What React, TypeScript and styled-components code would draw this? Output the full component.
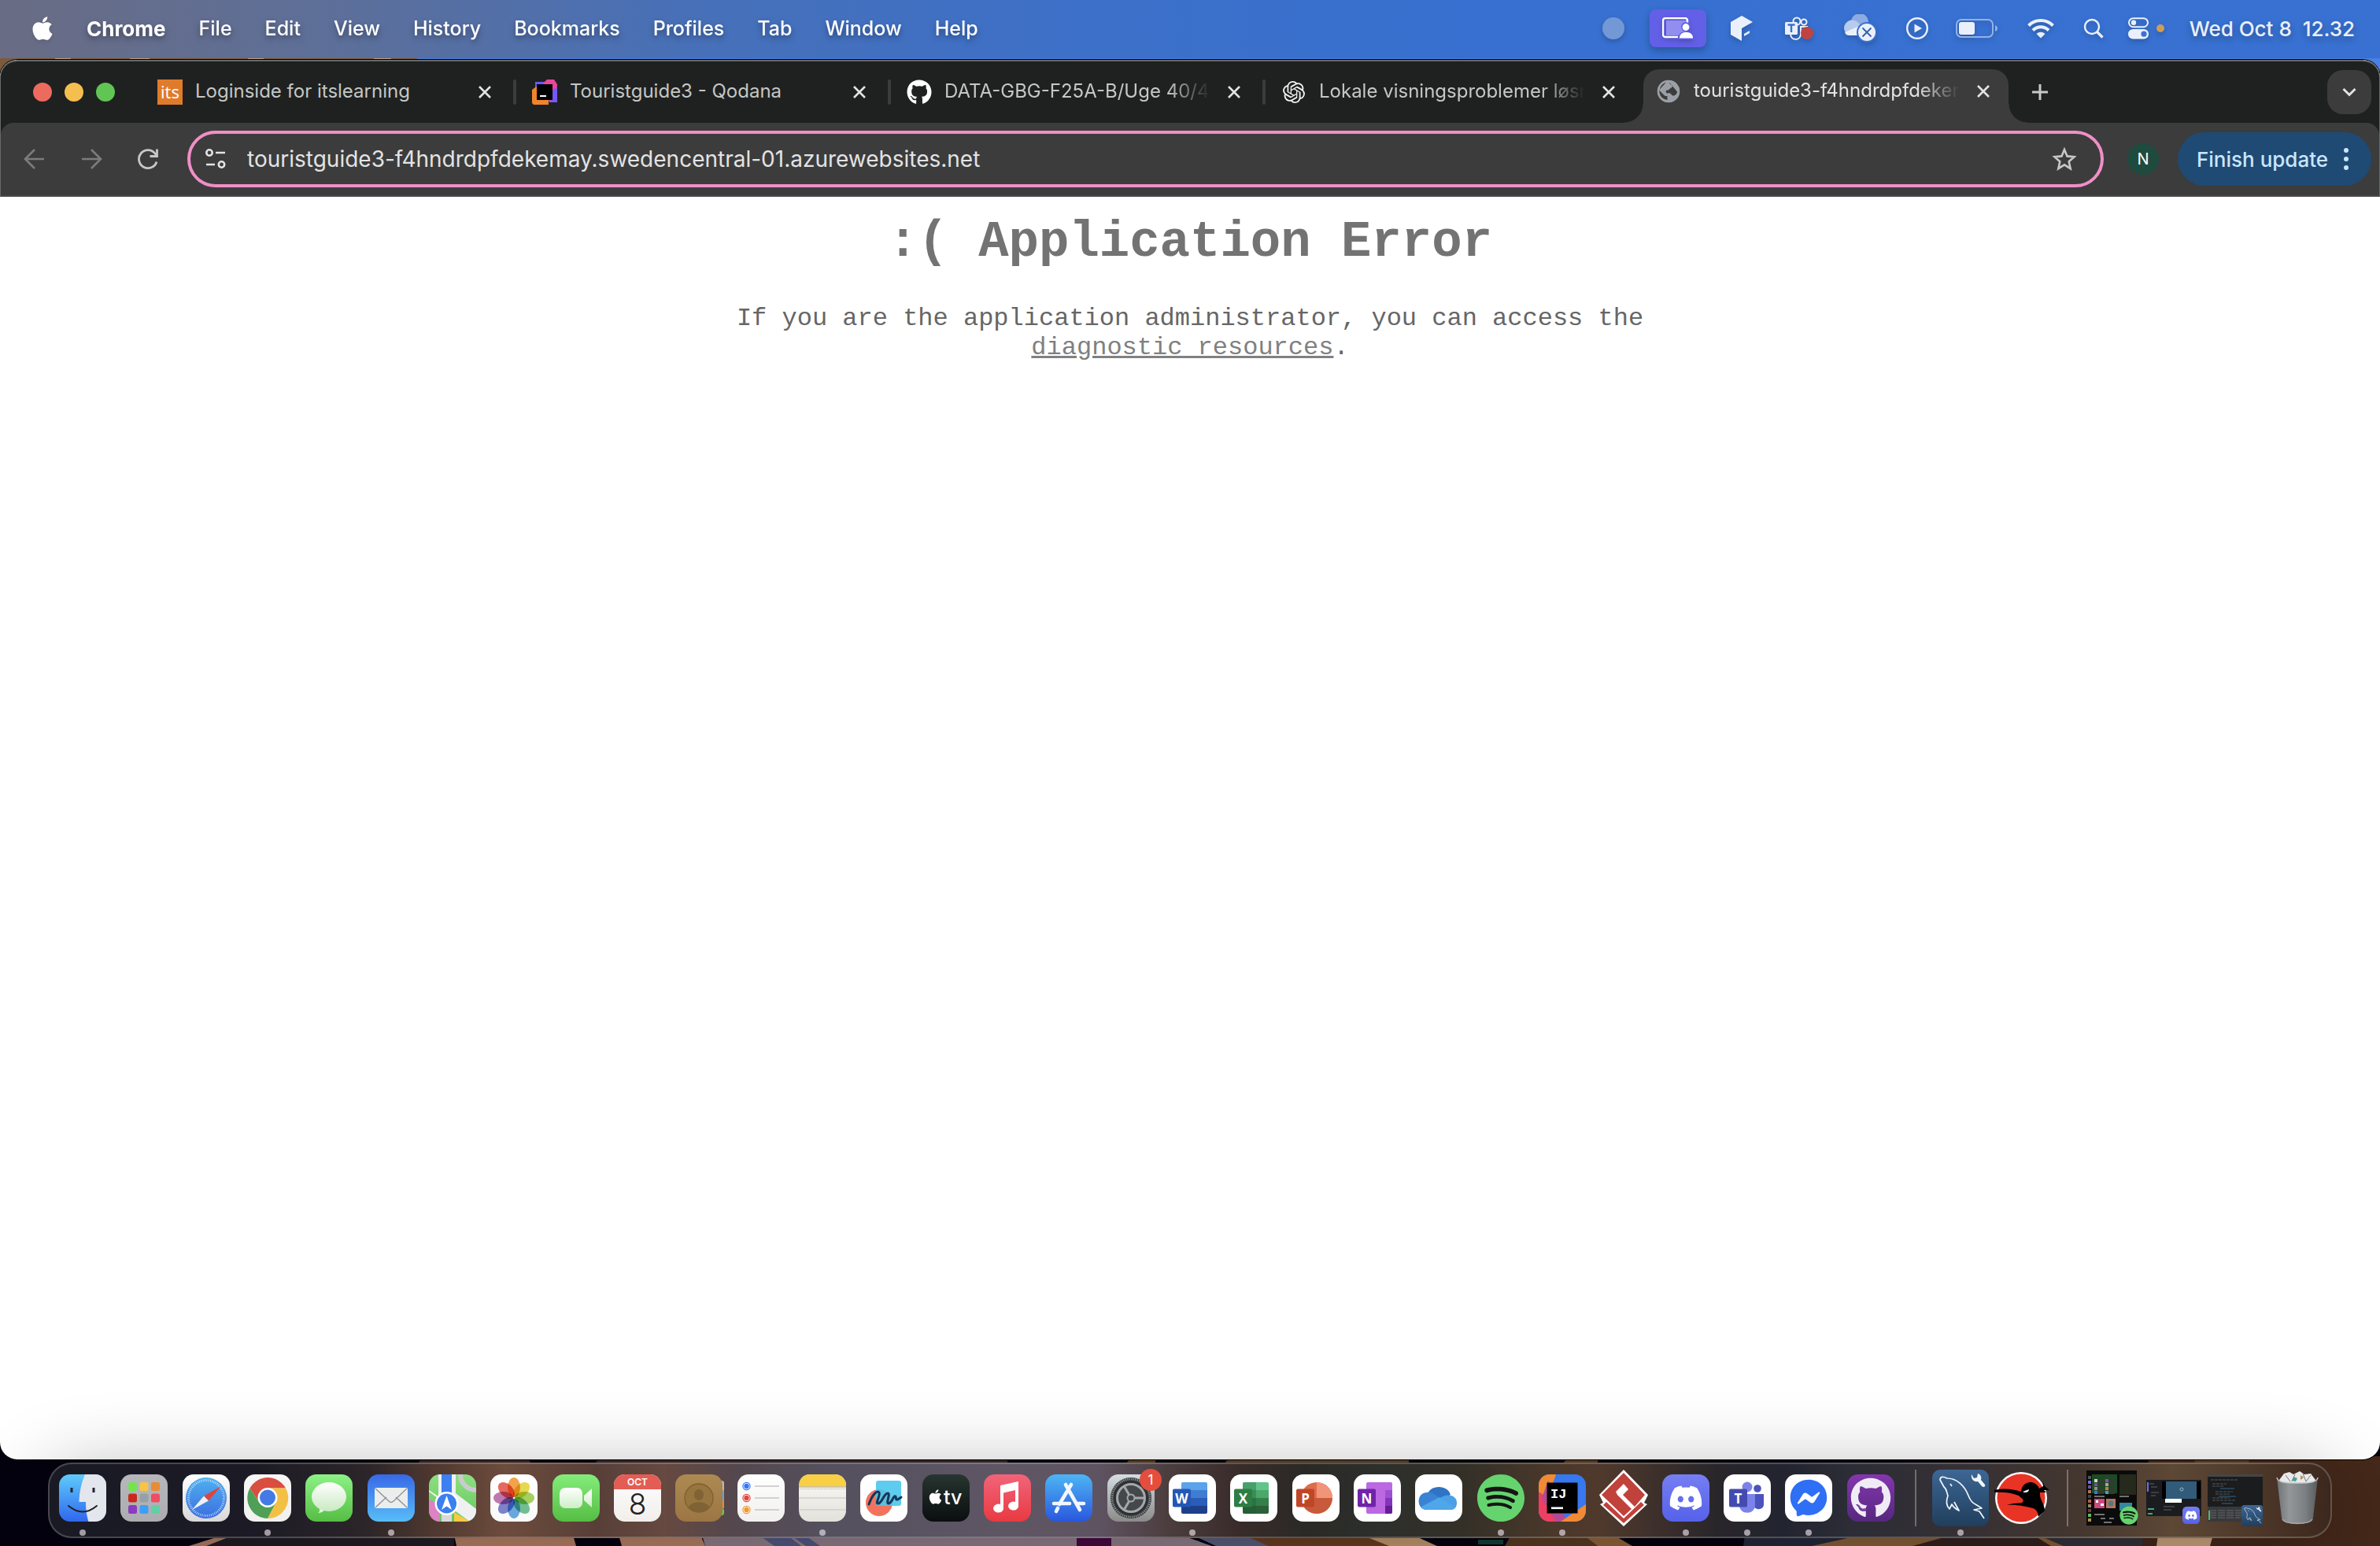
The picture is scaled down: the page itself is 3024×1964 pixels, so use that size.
import React from "react";
import styled, { createGlobalStyle } from "styled-components";
import { FaApple, FaDiscord, FaFacebookMessenger, FaGithub, FaSpotify } from "react-icons/fa";
import { SiOpenai } from "react-icons/si";

const GlobalStyle = createGlobalStyle`
  *, *::before, *::after { box-sizing: border-box; }
  html, body { margin: 0; padding: 0; }
  body { font-family: Inter, "Liberation Sans", sans-serif; background: #05030f; }
  button { font: inherit; color: inherit; background: none; border: 0; padding: 0; margin: 0; cursor: default; }
  svg { display: block; flex: none; }
`;

/* ---------- desktop ---------- */

const Desktop = styled.div`
  position: relative;
  isolation: isolate;
  display: flex;
  flex-direction: column;
  min-height: 100vh;
  overflow: hidden;
`;

const WallpaperArt = styled.svg`
  position: absolute;
  inset: 0;
  width: 100%;
  height: 100%;
  z-index: -1;
`;

const Wallpaper = () => (
  <WallpaperArt viewBox="0 0 3024 1964" preserveAspectRatio="none" aria-hidden="true">
    <rect width="3024" height="1964" fill="#04020f" />
    <rect width="3024" height="200" fill="#4a80e4" />
    <path d="M0 0H530V76H0Z" fill="#7d5a3c" />
    <path d="M0 70H60V140H0Z" fill="#7d5a3c" />
    <path d="M70 70h20v10h-20zM165 70h25v10h-25zM315 70h20v10h-20zM475 70h22v10h-22z" fill="#c39f7d" />
    <path d="M240 1964L275 1953H577V1964Z" fill="#211f26" />
    <path d="M240 1964L275 1953H290L262 1964Z" fill="#b5806a" />
    <path d="M577 1950H728L732 1964H580ZM786 1950H890L896 1964H790Z" fill="#b98266" />
    <path d="M892 1950H1500L1540 1964H896Z" fill="#93808d" />
    <path d="M964 1950H1000L1018 1964H984ZM1004 1950H1022L1042 1964H1024Z" fill="#545a86" />
    <path d="M1368 1950h44v14h-44z" fill="#4a0a45" />
    <path d="M1515 1950H1590L1622 1964H1545Z" fill="#5a5f80" />
    <path d="M1580 1950H1740L1780 1964H1612Z" fill="#6b3f22" />
    <path d="M1730 1950H1795L1826 1964H1765Z" fill="#c69a6f" />
    <path d="M1878 1956h32v6h-32z" fill="#174237" />
    <path d="M1920 1950H2014L2030 1964H1912Z" fill="#5b3c25" />
    <path d="M2012 1950H2050L2074 1964H2030Z" fill="#95673c" />
    <path d="M2217 1950H2370L2310 1964H2215Z" fill="#262a3c" />
    <path d="M2352 1953H2600L2626 1964H2302Z" fill="#8a613a" />
    <path d="M2470 1953H2588L2606 1964H2430Z" fill="#33231f" />
    <path d="M2596 1953H2730V1964H2622Z" fill="#35333c" />
    <path d="M2730 1850H3024V1964H2722Z" fill="#45291a" />
    <path d="M2742 1950H2812L2808 1964H2740Z" fill="#cfa67f" />
    <path d="M2790 1850H2860L2856 1860H2788Z" fill="#5c4129" />
    <path d="M535 1854H672L675 1860H530ZM760 1854H1280V1860H755Z" fill="#3a2a2c" />
    <path d="M1435 1854H1468V1860H1430ZM1560 1854H1790V1860H1555ZM1990 1854H2030V1860H1985Z" fill="#5c4129" />
  </WallpaperArt>
);

/* ---------- menu bar ---------- */

const MenuBar = styled.header`
  display: flex;
  align-items: center;
  justify-content: space-between;
  height: 74px;
  padding: 0 32px 2px 40px;
  background: linear-gradient(90deg, #696c84 0%, #5d6f99 14%, #4770b8 29%, #3d70c8 45%, #3770d0 62%, #3871d1 100%);
  color: #fff;
  font-size: 26px;
  font-weight: 500;
  text-shadow: 0 4px 8px rgba(0, 0, 0, 0.3);
  white-space: nowrap;
`;

const MenuList = styled.nav`
  display: flex;
  align-items: center;
  gap: 42px;
`;

const MenuItem = styled.button<{ $app?: boolean }>`
  font-size: ${(p) => (p.$app ? 26 : 25)}px;
  font-weight: ${(p) => (p.$app ? 700 : 500)};
  text-shadow: inherit;
  filter: drop-shadow(0 2px 2px rgba(0, 0, 0, 0.1));
`;

const AppleItem = styled(MenuItem)`
  display: flex;
  justify-content: center;
  width: 28px;
`;

const StatusList = styled.div`
  display: flex;
  align-items: center;
  color: #eaf0fb;
`;

const StatusButton = styled.button<{ $width: number; $active?: boolean }>`
  display: flex;
  align-items: center;
  justify-content: center;
  width: ${(p) => p.$width}px;
  height: 48px;
  border-radius: 8px;
  background: ${(p) => (p.$active ? "#6360e8" : "transparent")};
  box-shadow: ${(p) => (p.$active ? "0 4px 10px rgba(0,0,0,.25)" : "none")};
  svg { filter: drop-shadow(0 3px 3px rgba(0, 0, 0, 0.2)); }
`;

const Clock = styled.time`
  margin-left: 28px;
  white-space: pre;
`;

const MENU = ["File", "Edit", "View", "History", "Bookmarks", "Profiles", "Tab", "Window", "Help"];

const TopMenu = () => (
  <MenuBar>
    <MenuList aria-label="Menu bar">
      <AppleItem aria-label="Apple menu"><FaApple size={34} /></AppleItem>
      <MenuItem $app>Chrome</MenuItem>
      {MENU.map((m) => <MenuItem key={m}>{m}</MenuItem>)}
    </MenuList>
    <StatusList>
      <StatusButton $width={92} aria-label="Recording status">
        <svg width="28" height="28"><circle cx="14" cy="14" r="14" fill="#7398d6" /></svg>
      </StatusButton>
      <StatusButton $width={72} $active aria-label="Screen sharing">
        <svg width="40" height="28" viewBox="0 0 40 28">
          <rect x="5" y="4" width="26" height="19" fill="#918eef" />
          <path d="M20 25H4a3 3 0 0 1-3-3V4a3 3 0 0 1 3-3h25a3 3 0 0 1 3 3v3" fill="none" stroke="#fff" strokeWidth="2.4" />
          <circle cx="30" cy="12" r="6" fill="#6360e8" />
          <path d="M20 28c0-7 4-10 10-10s10 3 10 10z" fill="#6360e8" />
          <circle cx="30" cy="12.500" r="4.400" fill="#fff" />
          <path d="M22 26.500c0-5 3-7.500 8.500-7.500s8.500 2.500 8.500 7.500z" fill="#fff" />
        </svg>
      </StatusButton>
      <StatusButton $width={90} aria-label="Cube utility">
        <svg width="28" height="32" viewBox="0 0 28 32" fill="#eaf0fb">
          <path d="M14 0L28 8L14 16V32L0 24V8Z" /><path d="M17 23l7-4v3l-7 4z" />
        </svg>
      </StatusButton>
      <StatusButton $width={56} aria-label="Teams status">
        <svg width="38" height="30" viewBox="0 0 38 30">
          <g fill="none" stroke="#eaf0fb" strokeWidth="2">
            <circle cx="16" cy="6" r="4.500" /><circle cx="25" cy="7" r="3.500" />
            <path d="M8 22c0 9 12 9 13 1V13h8v5" />
          </g>
          <rect x="1" y="7" width="16" height="16" rx="1.500" fill="#eaf0fb" />
          <path d="M4.500 10.500h9M9 10.500V20" stroke="#3871d1" strokeWidth="2.400" />
          <circle cx="29" cy="21" r="8" fill="#bf4441" />
        </svg>
      </StatusButton>
      <StatusButton $width={98} aria-label="OneDrive status">
        <svg width="42" height="36" viewBox="0 0 42 36">
          <path d="M10 9a11 11 0 0 1 22 2v12H16z" fill="#8cabe2" />
          <path d="M8 27a9 9 0 1 1 6-19c5 1 7 5 9 9l-8 10z" fill="#b7cbef" />
          <path d="M2 23L18 16l12 2v9H8c-3 0-5-1-6-4z" fill="#eaf0fb" />
          <circle cx="30" cy="23" r="13" fill="#3871d1" /><circle cx="30" cy="23" r="11" fill="#eaf0fb" />
          <path d="M24.500 17.500l11 11m0-11l-11 11" stroke="#3460a8" strokeWidth="1.800" />
        </svg>
      </StatusButton>
      <StatusButton $width={48} aria-label="Now playing">
        <svg width="28" height="28" viewBox="0 0 28 28">
          <circle cx="14" cy="14" r="12.800" fill="none" stroke="#eaf0fb" strokeWidth="2.400" />
          <path d="M10.500 8.500L20 14l-9.500 5.500z" fill="#eaf0fb" />
        </svg>
      </StatusButton>
      <StatusButton $width={104} aria-label="Battery">
        <svg width="54" height="26" viewBox="0 0 54 26">
          <rect x="1" y="2" width="46" height="22" rx="6" fill="none" stroke="#93b2e8" strokeWidth="2" />
          <rect x="4" y="5" width="20" height="16" rx="3" fill="#eaf0fb" />
          <path d="M50 9v8c2-1 3-2 3-4s-1-3-3-4z" fill="#93b2e8" />
        </svg>
      </StatusButton>
      <StatusButton $width={58} aria-label="Wi-Fi">
        <svg width="34" height="26" viewBox="0 0 34 26" fill="none" stroke="#eaf0fb" strokeWidth="4">
          <path d="M1.500 9.500a22 22 0 0 1 31 0" /><path d="M7 15.500a14 14 0 0 1 20 0" />
          <path d="M17 25.500l-5.500-5.500a8 8 0 0 1 11 0z" fill="#eaf0fb" stroke="none" />
        </svg>
      </StatusButton>
      <StatusButton $width={76} aria-label="Search">
        <svg width="26" height="26" viewBox="0 0 26 26" fill="none" stroke="#eaf0fb">
          <circle cx="11" cy="11" r="9" strokeWidth="2.400" /><path d="M17.500 17.500l7 7" strokeWidth="3.200" />
        </svg>
      </StatusButton>
      <StatusButton $width={38} aria-label="Control Center">
        <svg width="28" height="28" viewBox="0 0 28 28">
          <rect x="2" y="1.200" width="24" height="11" rx="5.500" fill="none" stroke="#eaf0fb" strokeWidth="2" />
          <circle cx="8" cy="6.700" r="3.200" fill="#eaf0fb" />
          <rect x="1" y="15" width="26" height="12.500" rx="6.200" fill="#eaf0fb" />
          <circle cx="21" cy="21.200" r="3.600" fill="#3871d1" />
        </svg>
      </StatusButton>
      <StatusButton $width={18} aria-label="Microphone in use">
        <svg width="10" height="10"><circle cx="5" cy="5" r="5" fill="#cf9c58" /></svg>
      </StatusButton>
      <Clock>{"Wed Oct 8  12.32"}</Clock>
    </StatusList>
  </MenuBar>
);

/* ---------- browser window ---------- */

const BrowserWindow = styled.section`
  flex: 1;
  display: flex;
  flex-direction: column;
  margin-top: 2px;
  border-radius: 22px;
  overflow: hidden;
  background: #fff;
  box-shadow: 0 0 0 1px #000;
`;

const Chrome = styled.div`
  border: 1px solid #666a69;
  border-top-width: 2px;
  border-bottom: 2px solid #4a4848;
  border-radius: 22px 22px 0 0;
  background: #1f2120;
`;

const TabStrip = styled.div`
  display: flex;
  align-items: center;
  height: 78px;
  padding-right: 10px;
`;

const TrafficLights = styled.div`
  display: flex;
  gap: 16px;
  width: 179px;
  padding-left: 41px;
`;

const Light = styled.button<{ $color: string }>`
  width: 24px;
  height: 24px;
  border-radius: 50%;
  background: ${(p) => p.$color};
`;

const TabSlot = styled.div<{ $active?: boolean }>`
  position: relative;
  display: flex;
  align-items: center;
  align-self: ${(p) => (p.$active ? "flex-end" : "center")};
  flex: 0 1 ${(p) => (p.$active ? 464 : 472)}px;
  min-width: 0;
  height: ${(p) => (p.$active ? 68 : 56)}px;
  margin: 0 ${(p) => (p.$active ? 4 : 0)}px;
  padding: ${(p) => (p.$active ? "0 22px 12px 16px" : "0 26px 0 20px")};
  border-radius: 20px 20px 0 0;
  background: ${(p) => (p.$active ? "#3c3c3c" : "transparent")};
  color: ${(p) => (p.$active ? "#e3e3e3" : "#c4c7c5")};

  &::before, &::after {
    content: "";
    display: ${(p) => (p.$active ? "block" : "none")};
    position: absolute;
    bottom: 0;
    width: 24px;
    height: 24px;
  }
  &::before { right: 100%; background: radial-gradient(circle at 0 0, transparent 23px, #3c3c3c 24px); }
  &::after { left: 100%; background: radial-gradient(circle at 100% 0, transparent 23px, #3c3c3c 24px); }
`;

const Favicon = styled.span`
  display: flex;
  flex: none;
  align-items: center;
  justify-content: center;
  width: 32px;
  height: 32px;
`;

const TabTitle = styled.span<{ $fade?: boolean }>`
  flex: 1;
  min-width: 0;
  margin: 0 20px 0 16px;
  padding-bottom: 2px;
  overflow: hidden;
  white-space: nowrap;
  font-size: 24px;
  line-height: 32px;
  mask-image: ${(p) => (p.$fade ? "linear-gradient(90deg, #000 84%, transparent 100%)" : "none")};
`;

const TabDivider = styled.span<{ $hidden?: boolean }>`
  flex: none;
  width: 4px;
  height: 32px;
  border-radius: 2px;
  background: ${(p) => (p.$hidden ? "transparent" : "#3c3c3c")};
`;

const IconButton = styled.button<{ $size: number; $filled?: boolean; $dim?: boolean }>`
  display: flex;
  flex: none;
  align-items: center;
  justify-content: center;
  width: ${(p) => p.$size}px;
  height: ${(p) => p.$size}px;
  border-radius: 20px;
  background: ${(p) => (p.$filled ? "#3c3c3c" : "transparent")};
  color: ${(p) => (p.$dim ? "#7c7c7c" : "#c7c7c7")};
`;

const Spacer = styled.div`
  flex: 1;
`;

const NewTab = styled.div`
  display: flex;
  padding-left: 4px;
`;

const CloseIcon = () => (
  <svg width="20" height="20" viewBox="0 0 20 20" stroke="#e3e3e3" strokeWidth="2.600">
    <path d="M3 3l14 14M17 3L3 17" />
  </svg>
);

const ItsIcon = () => (
  <svg width="32" height="32" viewBox="0 0 32 32">
    <rect width="32" height="32" fill="#e07b2c" />
    <text x="16" y="24" textAnchor="middle" fontFamily="Open Sans, sans-serif" fontSize="22" fill="#fff">its</text>
  </svg>
);

const QodanaIcon = () => (
  <svg width="32" height="32" viewBox="0 0 32 32">
    <path d="M4 3h15l3 8v10H4z" fill="#6b57ff" />
    <path d="M14 5L19 0h9l4 6-1 23h-9z" fill="#e8469b" />
    <path d="M24 14l8-4v19h-9z" fill="#7657f4" />
    <path d="M0 13l7-5 14 18v6H2l-2-2z" fill="#f0832e" />
    <rect x="6" y="6" width="20" height="20" />
    <rect x="10" y="20" width="8" height="2" fill="#fff" />
  </svg>
);

const GlobeIcon = () => (
  <svg width="32" height="32" viewBox="0 0 32 32">
    <circle cx="16" cy="16" r="14" fill="#9aa0a6" />
    <path d="M13 4.500c-5 1-8 5.500-8.500 10.500l6 6c1 1 2 1 4 1v5c-6-1-10.500-5-11-12M17 4.500c1 4 3 3 4 4s-1 3-3 4-1 2-3 2-3 1-2 3 3 0 5 1 2 3 4 3 5-2 5-5" fill="#3c3c3c" />
    <circle cx="16" cy="16" r="13" fill="none" stroke="#9aa0a6" strokeWidth="2.600" />
  </svg>
);

const TABS = [
  { title: "Loginside for itslearning", icon: <ItsIcon /> },
  { title: "Touristguide3 - Qodana", icon: <QodanaIcon /> },
  { title: "DATA-GBG-F25A-B/Uge 40/4", icon: <FaGithub size={32} color="#fff" />, fade: true },
  { title: "Lokale visningsproblemer løsn", icon: <SiOpenai size={28} color="#f0f0f0" />, fade: true },
  { title: "touristguide3-f4hndrdpfdekem", icon: <GlobeIcon />, fade: true, active: true },
];

const Toolbar = styled.div`
  display: flex;
  align-items: center;
  height: 92px;
  padding: 0 10px 0 7px;
  border-radius: 16px 16px 0 0;
  background: #3c3c3c;
`;

const Omnibox = styled.form`
  display: flex;
  flex: 1;
  align-items: center;
  height: 72px;
  margin-left: 14px;
  padding: 0 12px;
  border: 4px solid #f08fc6;
  border-radius: 36px;
`;

const Address = styled.input`
  flex: 1;
  min-width: 0;
  margin-left: 20px;
  padding: 0;
  border: 0;
  outline: 0;
  background: none;
  color: #e3e3e3;
  font: 400 28px/36px Inter, "Liberation Sans", sans-serif;
`;

const Avatar = styled.button`
  width: 40px;
  height: 40px;
  margin: 0 24px 0 30px;
  border-radius: 50%;
  background: #1f4b3f;
  color: #fff;
  font-size: 20px;
  line-height: 40px;
`;

const UpdateButton = styled.button`
  display: flex;
  align-items: center;
  justify-content: space-between;
  width: 246px;
  height: 68px;
  padding: 0 28px 0 24px;
  border-radius: 34px;
  background: #1f4a73;
  color: #c9e6ff;
  font-size: 26px;
  font-weight: 500;
  white-space: nowrap;
`;

const Page = styled.main`
  flex: 1;
  width: 100%;
  max-width: 1200px;
  margin: 0 auto;
  color: #666;
  font-family: "Courier New", "Liberation Mono", monospace;
  text-align: center;
`;

const Heading = styled.h1`
  margin: 22px 0 0;
  color: #737373;
  font-size: 64px;
  line-height: 72px;
`;

const Message = styled.p`
  margin: 42px 0 0;
  font-size: 32px;
  line-height: 37px;
`;

const ResourceLink = styled.a`
  color: #808080;
  text-decoration: underline;
`;

const Browser = () => (
  <BrowserWindow>
    <Chrome>
      <TabStrip>
        <TrafficLights>
          <Light $color="#ed6a5e" aria-label="Close window" />
          <Light $color="#f5bf4f" aria-label="Minimize" />
          <Light $color="#61c554" aria-label="Full screen" />
        </TrafficLights>
        {TABS.map((t, i) => (
          <React.Fragment key={t.title}>
            <TabSlot $active={t.active}>
              <Favicon>{t.icon}</Favicon>
              <TabTitle $fade={t.fade}>{t.title}</TabTitle>
              <IconButton $size={20} aria-label={`Close ${t.title}`}><CloseIcon /></IconButton>
            </TabSlot>
            <TabDivider $hidden={i > 2} />
          </React.Fragment>
        ))}
        <NewTab>
          <IconButton $size={56} aria-label="New tab">
            <svg width="20" height="20" stroke="#c7c9c7" strokeWidth="3"><path d="M10 0v20M0 10h20" /></svg>
          </IconButton>
        </NewTab>
        <Spacer />
        <IconButton $size={56} $filled aria-label="Search tabs">
          <svg width="20" height="20" viewBox="0 0 20 20" fill="none" stroke="#e3e3e3" strokeWidth="3"><path d="M2.500 6l7.500 7.500L17.500 6" /></svg>
        </IconButton>
      </TabStrip>
      <Toolbar>
        <IconButton $size={72} $dim aria-label="Back">
          <svg width="28" height="28" viewBox="0 0 28 28" fill="none" stroke="currentColor" strokeWidth="2.600"><path d="M14 2L2 14l12 12M2 14h24" /></svg>
        </IconButton>
        <IconButton $size={72} $dim aria-label="Forward">
          <svg width="28" height="28" viewBox="0 0 28 28" fill="none" stroke="currentColor" strokeWidth="2.600"><path d="M14 2l12 12-12 12M26 14H2" /></svg>
        </IconButton>
        <IconButton $size={72} aria-label="Reload">
          <svg width="28" height="28" viewBox="0 0 28 28" fill="none" stroke="currentColor" strokeWidth="2.800">
            <path d="M25 17.500A11.500 11.500 0 1 1 23 7l2 2.500" /><path d="M25.500 1.500v9h-9" />
          </svg>
        </IconButton>
        <Omnibox onSubmit={(e) => e.preventDefault()}>
          <IconButton as="span" $size={40}>
            <svg width="28" height="28" viewBox="0 0 28 28" fill="none" stroke="#e3e3e3" strokeWidth="2.600">
              <circle cx="6" cy="6" r="3.700" /><path d="M14 6h12M2 21h11" /><circle cx="21.500" cy="21" r="3.700" />
            </svg>
          </IconButton>
          <Address aria-label="Address" defaultValue="touristguide3-f4hndrdpfdekemay.swedencentral-01.azurewebsites.net" />
          <IconButton type="button" $size={68} aria-label="Bookmark this tab">
            <svg width="32" height="32" viewBox="0 0 32 32" fill="none" stroke="currentColor" strokeWidth="2.600">
              <path d="M16 4l3.500 8.400 9 .8-6.800 6 2 9L16 23.400l-7.700 4.800 2-9-6.800-6 9-.8z" />
            </svg>
          </IconButton>
        </Omnibox>
        <Avatar aria-label="Profile N">N</Avatar>
        <UpdateButton>
          Finish update
          <svg width="8" height="28" fill="#c9e6ff"><circle cx="4" cy="3" r="3" /><circle cx="4" cy="14" r="3" /><circle cx="4" cy="25" r="3" /></svg>
        </UpdateButton>
      </Toolbar>
    </Chrome>
    <Page>
      <Heading>:( Application Error</Heading>
      <Message>
        If you are the application administrator, you can access the <ResourceLink href="#">diagnostic resources</ResourceLink>.
      </Message>
    </Page>
  </BrowserWindow>
);

/* ---------- dock artwork ---------- */

const Grad = ({ id, from, to }: { id: string; from: string; to: string }) => (
  <defs>
    <linearGradient id={id} x1="0" y1="0" x2="0" y2="1">
      <stop offset="0" stopColor={from} /><stop offset="1" stopColor={to} />
    </linearGradient>
  </defs>
);

const Tile = ({ id, from, to, children }: { id: string; from: string; to: string; children?: React.ReactNode }) => (
  <svg width="60" height="60" viewBox="0 0 60 60" overflow="visible">
    <Grad id={id} from={from} to={to} />
    <clipPath id={`${id}-clip`}><rect width="60" height="60" rx="14" /></clipPath>
    <g clipPath={`url(#${id}-clip)`}>
      <rect width="60" height="60" fill={`url(#${id})`} />
      {children}
    </g>
  </svg>
);

const Finder = () => (
  <Tile id="finder" from="#5fcbfa" to="#2f67ee">
    <path d="M33 0C28 12 26 22 25.500 35H34C34 46 35.500 54 37.500 60H60V0Z" fill="#e3e6ec" />
    <path d="M16 17v6M44 17v6" stroke="#223" strokeWidth="3" />
    <path d="M12 40Q30 55 48 40" fill="none" stroke="#222" strokeWidth="2" strokeLinecap="round" />
  </Tile>
);

const PAD = ["#74e34f", "#f6c544", "#e88b35", "#c9291d", "#96a0a5", "#ef4d62", "#8a3bc0", "#3ba0f5", "#63cfa4"];
const Launchpad = () => (
  <Tile id="launchpad" from="#b7b7bb" to="#adadb1">
    {PAD.map((c, i) => (
      <rect key={c} x={10 + (i % 3) * 14.5} y={10 + Math.floor(i / 3) * 14.5} width="11" height="11" rx="2.500" fill={c} />
    ))}
  </Tile>
);

const Safari = () => (
  <Tile id="safari" from="#ffffff" to="#d8d8d8">
    <Grad id="safari-dial" from="#4fb0f0" to="#3b6fe0" />
    <circle cx="30" cy="30" r="26" fill="url(#safari-dial)" />
    <circle cx="30" cy="30" r="22.500" fill="none" stroke="#fff" strokeOpacity=".75" strokeWidth="3" strokeDasharray=".8 1.550" />
    <path d="M49 15L33 33.500 27 27.500Z" fill="#e1443a" />
    <path d="M12 45L27 27.500 33 33.500Z" fill="#f0f0f0" />
  </Tile>
);

const ChromeIcon = () => (
  <Tile id="chrome" from="#f7f7f7" to="#f0f0ee">
    <path d="M7.500 17.500A26 26 0 0 1 53 17.500H30L19.600 36Z" fill="#d94e3f" />
    <path d="M53 17.500A26 26 0 0 1 30 56L40.400 36 30 17.500Z" fill="#f3bf45" />
    <path d="M30 56A26 26 0 0 1 7.500 17.500L19.600 36 40.400 36Z" fill="#4f9f57" />
    <circle cx="30" cy="29.500" r="12.500" fill="#fff" /><circle cx="30" cy="29.500" r="10" fill="#437ae6" />
  </Tile>
);

const Messages = () => (
  <Tile id="messages" from="#8bf285" to="#56bd44">
    <Grad id="bubble" from="#ffffff" to="#c9e9c1" />
    <path d="M17 42c2 3 1 6-1 7 4 0 7-2 9-4z" fill="#e0f4dc" />
    <ellipse cx="30" cy="28.500" rx="22" ry="18.500" fill="url(#bubble)" />
  </Tile>
);

const Mail = () => (
  <Tile id="mail" from="#3868e6" to="#58bdf8">
    <rect x="9" y="17" width="42" height="26" rx="2" fill="#eceded" />
    <path d="M10 42L24 29M50 42L36 29M10 18L27 34q3 3 6 0L50 18" fill="none" stroke="#8e9092" strokeWidth="1.300" />
  </Tile>
);

const Maps = () => (
  <Tile id="maps" from="#8fdf82" to="#62c95c">
    <path d="M0 32L14 38V60H0Z" fill="#dd82c4" />
    <path d="M0 22L60 66V44L34 24V0H12V28L0 20Z" fill="#f0f0f2" />
    <path d="M32 60V48L52 60Z" fill="#f6ca45" />
    <path d="M16 0H29V40H16Z" fill="#3c80f2" />
    <path d="M16 44H29V60H16Z" fill="#d8d8da" />
    <circle cx="60" cy="0" r="20" fill="none" stroke="#c9ccce" strokeWidth="6" />
    <circle cx="22.500" cy="37" r="15" fill="#fff" /><circle cx="22.500" cy="37" r="12.500" fill="#3b7ff0" />
    <path d="M22.500 27L29 45 22.500 40.500 16 45Z" fill="#fff" />
  </Tile>
);

const PETALS = ["#f2962f", "#e5d438", "#9ccb4c", "#5fb98a", "#55a0dd", "#6f73c4", "#b866a9", "#e4554a"];
const Petal = styled.ellipse`
  mix-blend-mode: multiply;
`;
const Photos = () => (
  <Tile id="photos" from="#ffffff" to="#fafafa">
    {PETALS.map((c, i) => (
      <Petal key={c} cx="30" cy="16.500" rx="8" ry="12.500" fill={c} opacity=".88" transform={`rotate(${i * 45} 30 30)`} />
    ))}
  </Tile>
);

const FaceTime = () => (
  <Tile id="facetime" from="#84ec7a" to="#56bd44">
    <Grad id="camera" from="#ffffff" to="#cdeec7" />
    <rect x="9" y="17" width="29" height="26" rx="7" fill="url(#camera)" />
    <path d="M40 27L50 18V42L40 33Z" fill="url(#camera)" />
  </Tile>
);

const Calendar = () => (
  <Tile id="calendar" from="#ffffff" to="#f1eeea">
    <rect width="60" height="19" fill="#e35d54" />
    <text x="30" y="14" textAnchor="middle" fontSize="12" fontWeight="600" fill="#fff">OCT</text>
    <text x="30" y="51" textAnchor="middle" fontSize="37" fontWeight="300" fill="#222">8</text>
  </Tile>
);

const Contacts = () => (
  <svg width="60" height="60" viewBox="0 0 60 60" overflow="visible">
    <Grad id="contacts" from="#ad8a52" to="#9c7544" />
    <rect x="48" y="8" width="14" height="14" rx="3" fill="#b9b9b9" /><rect x="48" y="21" width="14" height="12" fill="#5aa7e8" />
    <rect x="48" y="33" width="14" height="10" fill="#e88b35" /><rect x="48" y="43" width="14" height="9" rx="3" fill="#69c75c" />
    <rect width="60" height="60" rx="14" fill="url(#contacts)" />
    <circle cx="30" cy="30" r="18" fill="#97753f" stroke="#7e602f" strokeWidth="1.300" />
    <ellipse cx="30" cy="26" rx="6" ry="7" fill="#806334" /><path d="M17 42c2-9 24-9 26 0-6 8-20 8-26 0z" fill="#806334" />
  </svg>
);

const Reminders = () => (
  <Tile id="reminders" from="#ffffff" to="#f1f0ee">
    {["#3478f6", "#e2463c", "#ee9a32"].map((c, i) => (
      <g key={c} transform={`translate(0 ${15 + i * 15})`}>
        <circle cx="11.500" cy="0" r="4.600" fill="#fff" stroke={c} strokeWidth="1.200" /><circle cx="11.500" cy="0" r="3.200" fill={c} />
        <path d="M22 0h31" stroke="#c4c4c4" strokeWidth="1.600" />
      </g>
    ))}
  </Tile>
);

const Notes = () => (
  <Tile id="notes" from="#fbfaf7" to="#e3e1da">
    <rect width="60" height="15.500" fill="#f8cf45" />
    <path d="M0 16h60" stroke="#a8a49a" strokeWidth="1.200" />
    <path d="M1 18.500h60" stroke="#aaa" strokeWidth="1" strokeDasharray="1 1.200" />
    <path d="M0 30h60M0 45h60" stroke="#d2d0ca" strokeWidth="1.600" />
  </Tile>
);

const Freeform = () => (
  <Tile id="freeform" from="#ffffff" to="#ffffff">
    <circle cx="24" cy="36" r="17" fill="#f2735c" />
    <rect x="20" y="8" width="32" height="32" rx="3" fill="#4cc6ec" fillOpacity=".9" />
    <path d="M11 38C16 24 22 20 24 23 26 27 18 38 23 37 28 36 30 24 35 24 39 24 32 37 36 37 41 36 42 26 45 28 46 31 44 35 52 29" fill="none" stroke="#14365a" strokeWidth="3" strokeLinecap="round" />
  </Tile>
);

const AppleTv = () => (
  <Tile id="appletv" from="#27352f" to="#0a0e10">
    <FaApple x={6} y={18} size={21} color="#fff" />
    <text x="27" y="38" fontSize="25" fontWeight="500" fill="#fff">tv</text>
  </Tile>
);

const Music = () => (
  <Tile id="music" from="#f2647a" to="#e83a42">
    <path d="M21 14L44 9V41a6.500 5.500 0 1 1-4-6V20L25 23.500V44a6.500 5.500 0 1 1-4-6Z" fill="#fff" />
  </Tile>
);

const AppStore = () => (
  <Tile id="appstore" from="#4db5f4" to="#2957dd">
    <g stroke="#f2f6ff" strokeWidth="4.600" strokeLinecap="round">
      <path d="M33 13L18 38M26 13L44 45M11 37H31M41 37H49M16 43L14 47" />
    </g>
  </Tile>
);

const Settings = () => (
  <svg width="60" height="60" viewBox="0 0 60 60" overflow="visible">
    <Grad id="settings" from="#d4dde2" to="#8b8b89" />
    <rect width="60" height="60" rx="14" fill="url(#settings)" />
    <circle cx="30" cy="30" r="26" fill="#2e3133" />
    <circle cx="30" cy="30" r="24" fill="none" stroke="#85888a" strokeWidth="3" strokeDasharray="1.500 1" />
    <circle cx="30" cy="30" r="17.500" fill="#45484a" stroke="#a5a8aa" strokeWidth="3" />
    <path d="M30 30H47M30 30L21.500 15.500M30 30L21.500 44.500" stroke="#a5a8aa" strokeWidth="3" />
    <circle cx="30" cy="30" r="4.500" fill="#45484a" stroke="#a5a8aa" strokeWidth="2" />
    <circle cx="55" cy="7" r="14" fill="#e54d3d" />
    <text x="55" y="13" textAnchor="middle" fontSize="17" fill="#fff">1</text>
  </svg>
);

const Office = ({ id, letter, bands, box, round }: { id: string; letter: string; bands: string[]; box: string; round?: boolean }) => (
  <Tile id={id} from="#ffffff" to="#ffffff">
    <clipPath id={`${id}-sheet`}>{round ? <circle cx="31" cy="30" r="20" /> : <rect x="16" y="10" width="33" height="40" rx="2" />}</clipPath>
    <g clipPath={`url(#${id}-sheet)`}>
      {bands.map((c, i) => <rect key={i} x="11" y={10 + (i * 40) / bands.length} width="40" height={40 / bands.length + 0.5} fill={c} />)}
      {id === "excel" && <path d="M16 10H33V50H16Z" fill="#185c37" fillOpacity=".35" />}
      {id === "powerpoint" && <path d="M31 10H51V30H31Z" fill="#f2947a" />}
      {id === "onenote" && (
        <>
          <path d="M40 20h9v10h-9z" fill="#9c4fd0" /><path d="M40 30h9v10h-9z" fill="#8235b8" /><path d="M40 40h9v10h-9z" fill="#651f96" />
        </>
      )}
    </g>
    <rect x="5" y="18.500" width="23" height="23" rx="2" fill={box} />
    <text x="16.500" y="36.500" textAnchor="middle" fontFamily="Open Sans, sans-serif" fontSize="17" fontWeight="700" fill="#fff">{letter}</text>
  </Tile>
);

const OneDrive = () => (
  <Tile id="onedrive" from="#ffffff" to="#ffffff">
    <path d="M16 24a15 12 0 0 1 29 2L30 34Z" fill="#2f74c4" />
    <path d="M14 45a10 11 0 0 1 1-22c7-1 10 3 16 7l18 14z" fill="#3a83d4" />
    <path d="M31 31c6-7 22-6 22 5 0 6-3 9-8 9z" fill="#4a9fe6" />
    <path d="M8 41L31 29 51 42c-2 2-3 3-7 3H15c-3 0-5-1-7-4z" fill="#4fa6e8" />
  </Tile>
);

const Spotify = ({ size = 62 }: { size?: number }) => (
  <svg width={size} height={size} viewBox="0 0 62 62">
    <circle cx="31" cy="31" r="29" fill="#151515" />
    <FaSpotify size={62} color="#65d46e" />
  </svg>
);

const IntelliJ = () => (
  <Tile id="intellij" from="#3478f0" to="#3f76ee">
    <path d="M0 0H22L10 36 0 40Z" fill="#f08a35" /><path d="M0 22L12 30 36 60H0Z" fill="#ee3f63" />
    <path d="M12 8L36 60H22L4 30Z" fill="#b24b94" /><path d="M28 60L60 38V60Z" fill="#f08a35" />
    <rect x="10.500" y="10.500" width="39" height="39" />
    <text x="15" y="30" fontFamily="Liberation Mono, monospace" fontSize="17" fontWeight="700" fill="#fff">IJ</text>
    <rect x="16" y="41.500" width="15" height="2.600" fill="#fff" />
  </Tile>
);

const VisualParadigm = () => (
  <svg width="64" height="74" viewBox="0 0 64 74">
    <path d="M32 1L63 33 58 43 62 45 32 73 2 45 6 43 1 33Z" fill="#fff" />
    <path d="M32 5L59 33 46 48 31 33 38 26 32 19 22 29 24 33 42 51 32 60 4 33Z" fill="#c0423b" />
    <path d="M6 46L10 42 32 63 54 42 58 46 32 69Z" fill="#c0423b" />
  </svg>
);

const Discord = ({ size = 60, id = "discord" }: { size?: number; id?: string }) => (
  <svg width={size} height={size} viewBox="0 0 60 60">
    <Grad id={id} from="#767ef2" to="#5661ea" />
    <rect width="60" height="60" rx="14" fill={`url(#${id})`} />
    <FaDiscord x={8} y={8} size={44} color="#fff" />
  </svg>
);

const Teams = () => (
  <Tile id="teams" from="#ffffff" to="#ffffff">
    <circle cx="43" cy="18" r="4.800" fill="#4b53bc" /><path d="M38 25H51V38c0 7-9 8-13 3Z" fill="#4b53bc" />
    <circle cx="30" cy="16" r="6.500" fill="#7b83eb" /><path d="M20 25H40V39c0 13-20 13-20 0Z" fill="#7b83eb" />
    <rect x="7" y="18.500" width="23" height="23" rx="2" fill="#444bb0" />
    <text x="18.500" y="36.500" textAnchor="middle" fontFamily="Open Sans, sans-serif" fontSize="17" fontWeight="700" fill="#fff">T</text>
  </Tile>
);

const Messenger = () => (
  <Tile id="messenger" from="#ffffff" to="#ffffff"><FaFacebookMessenger x={6} y={6} size={48} color="#2e6ff6" /></Tile>
);

const GithubDesktop = () => (
  <Tile id="ghdesktop" from="#8436ae" to="#56287f"><FaGithub x={4} y={4} size={52} color="#f0ecf5" /></Tile>
);

const MySql = ({ size = 72, id = "mysql" }: { size?: number; id?: string }) => (
  <svg width={size} height={size} viewBox="0 0 72 72">
    <Grad id={id} from="#3d6795" to="#213e5c" />
    <rect width="72" height="72" rx="10" fill={`url(#${id})`} />
    <g fill="none" stroke="#f0f6fc" strokeWidth="1.700" strokeLinejoin="round">
      <path d="M66 62L60 53 53 51 63 49 55 44C50 42 48 38 46 33 41 20 31 11 19 11 14 8 10 9 10 13L15 22C19 25 18 29 20 33 17 41 18 46 22 50L25 44C27 48 30 50 34 52L28 41" />
      <path d="M23 18l2 3" />
    </g>
    <path d="M50 6l3 5 4-1 1-5c4 1 5 5 4 8l5 6c1 3-2 4-4 2l-5-6c-5 1-9-3-8-9z" fill="#f0f6fc" />
  </svg>
);

const Kiwi = () => (
  <svg width="70" height="68" viewBox="0 0 70 68">
    <circle cx="34" cy="34" r="33" fill="#fff" /><circle cx="34" cy="34" r="30.500" fill="#e93425" />
    <path d="M0 24C14 21 24 23 34 26 35 12 52 10 57 22L62 19 61 13 64 19 70 24 63 24 66 27 58 27C57 36 64 42 64 50L56 58C55 48 50 47 45 46 38 45 30 42 16 43 24 40 31 41 35 40 40 36 33 34 31 31 22 27 10 26 0 27Z" />
    <path d="M36 26l8-3c0 4-5 5-8 3z" fill="#fff" />
  </svg>
);

const ThumbSpotify = () => (
  <svg width="70" height="72" viewBox="0 0 70 72" overflow="visible">
    <rect width="64" height="70" x="2" y="1" fill="#0b0b0b" />
    <rect x="9" y="6" width="32" height="24" fill="#1d4a24" /><rect x="44" y="6" width="21" height="26" fill="#252a1c" />
    {[0, 1, 2, 3].map((r) => (
      <g key={r} fill="#313b33">
        <rect x="12" y={12 + r * 5} width="12" height="4" /><rect x="26" y={12 + r * 5} width="12" height="4" />
        <rect x="12" y={12 + r * 5} width="4" height="4" fill={["#cfd8c9", "#7a4f9c", "#8a8f96", "#3f76c9"][r]} />
        <rect x="26" y={12 + r * 5} width="4" height="4" fill={["#8a49c9", "#b9a184", "#c07e50", "#49a0aa"][r]} />
      </g>
    ))}
    {[0, 1, 2, 3, 4, 5, 6, 7, 8, 9].map((r) => (
      <rect key={r} x="4" y={8 + r * 6} width="4" height="4" fill={["#555", "#6f6df0", "#7a4f9c", "#a57b5c", "#444", "#b75e4c", "#9a8468", "#7b3548", "#5bbf62", "#b08a4e"][r]} />
    ))}
    <rect x="12" y="37" width="13" height="12" fill="#c94a7e" /><rect x="27" y="37" width="12" height="12" fill="#b5765c" />
    <path d="M14 39h3v3h-3zM20 43h4v3h-4z" fill="#fff" /><circle cx="33" cy="43" r="3.500" fill="#52788a" />
    <rect x="44" y="42" width="16" height="10" fill="#3586a3" />
    <path d="M12 34h13M44 34h12M12 57h13M20 62h6M31 62h6M24 67h10" stroke="#d8d8d8" strokeWidth="1" />
    <g transform="translate(44 46)"><Spotify size={24} /></g>
  </svg>
);

const ThumbDiscord = () => (
  <svg width="70" height="46" viewBox="0 0 70 46" overflow="visible">
    <rect width="70" height="46" fill="#1b1c20" /><rect x="20" y="2" width="49" height="22" fill="#000" />
    <rect x="25" y="2" width="39" height="22" fill="#315b79" /><circle cx="45" cy="12" r="2" fill="none" stroke="#9ab7c8" />
    <rect x="24" y="24" width="21" height="5" fill="#fff" />
    <path d="M4 5h6M6 9h8M6 16h10M6 20h6M22 34h14M22 38h10" stroke="#5d6068" />
    <path d="M2 3v12" stroke="#6a70e8" strokeWidth="2" /><path d="M2 37h8M2 43h6" stroke="#4aa37c" strokeWidth="2" />
    <g transform="translate(46 34)"><Discord size={22} id="discord-small" /></g>
  </svg>
);

const ThumbMySql = () => (
  <svg width="70" height="60" viewBox="0 0 70 60" overflow="visible">
    <rect width="70" height="60" fill="#1b1c1d" /><rect width="70" height="3" fill="#444547" /><rect y="41" width="70" height="19" fill="#37393c" />
    <path d="M4 7h34M6 12h18M6 15h14M10 22h22M10 25h18M6 30h22M6 33h30" stroke="#55585b" strokeDasharray="4 1" />
    <path d="M16 18h18M14 28h22M18 37h14" stroke="#2f6794" />
    <path d="M2 46h44M2 49h44M2 52h44M2 55h40" stroke="#65696c" strokeDasharray="9 2" />
    <path d="M2 46v12" stroke="#5bb45f" strokeWidth="2" />
    <g transform="translate(43 39)"><MySql size={27} id="mysql-small" /></g>
  </svg>
);

const Trash = () => (
  <svg width="54" height="70" viewBox="0 0 54 70">
    <defs>
      <linearGradient id="bin" x1="0" y1="0" x2="1" y2="0">
        <stop offset="0" stopColor="#6f7375" /><stop offset=".3" stopColor="#93979a" /><stop offset=".7" stopColor="#7b7f82" /><stop offset="1" stopColor="#585b5d" />
      </linearGradient>
    </defs>
    <path d="M4 12L10 4l7-2 5 3 8-4 6 4 8-1 6 8-4 6H8Z" fill="#e9e9e9" />
    <path d="M12 6l6 8M24 5l-4 9M34 4l4 10M44 6l-6 8" stroke="#777" /><path d="M22 8l5 2-2 4-5-1z" fill="#47a08a" /><path d="M31 6l4 3-4 3z" fill="#c58a52" />
    <path d="M1 9C2 15 10 16 27 16S52 15 53 9L47 60C46 71 8 71 7 60Z" fill="url(#bin)" />
    <path d="M1 9C2 15 10 16 27 16S52 15 53 9" fill="none" stroke="#c5c8ca" strokeWidth="1.500" />
    <path d="M8 62c4 7 34 7 38 0" fill="none" stroke="#a7abad" strokeWidth="1.500" />
  </svg>
);

/* ---------- dock ---------- */

const DockBar = styled.footer`
  display: flex;
  height: 96px;
  margin: 4px 61px 10px;
  padding: 3px 3px 0;
  border: 2px solid rgba(255, 255, 255, 0.2);
  border-radius: 30px;
  background: linear-gradient(
    90deg,
    #1a1a24 0%, #1c1b25 9%, #2c2529 14%, #503930 17%, #6d4c3d 20%, #573f38 24%, #664940 27%, #54474d 30%,
    #54505e 34%, #5f5664 42%, #5e5361 46%, #4c3e3f 49%, #392c2a 52%, #2b2926 55%, #2c2f2c 58%, #343028 62%,
    #4b382a 66%, #4f392c 68%, #29262a 73%, #222430 76%, #2c2d36 79%, #363034 84%, #44372f 89%, #5d4735 93%,
    #4c3628 97%, #3c271d 100%
  );
  background-clip: border-box;
  background-origin: border-box;
  box-shadow: 0 16px 100px rgba(0, 0, 0, 0.32);
`;

const DockCell = styled.button`
  display: flex;
  flex: 1 1 0;
  flex-direction: column;
  align-items: center;
  min-width: 0;
`;

const DockArt = styled.span`
  display: flex;
  align-items: center;
  justify-content: center;
  height: 80px;
`;

const RunningDot = styled.span`
  width: 8px;
  height: 8px;
  border-radius: 50%;
  background: rgba(235, 225, 232, 0.65);
`;

const DockDivider = styled.span`
  flex: none;
  width: 2px;
  height: 72px;
  margin: 4px 17px 0;
  background: rgba(255, 255, 255, 0.3);
`;

type DockEntry = { name: string; art: React.ReactNode; running?: boolean };

const APPS: DockEntry[] = [
  { name: "Finder", art: <Finder />, running: true },
  { name: "Launchpad", art: <Launchpad /> },
  { name: "Safari", art: <Safari /> },
  { name: "Chrome", art: <ChromeIcon />, running: true },
  { name: "Messages", art: <Messages /> },
  { name: "Mail", art: <Mail />, running: true },
  { name: "Maps", art: <Maps /> },
  { name: "Photos", art: <Photos /> },
  { name: "FaceTime", art: <FaceTime /> },
  { name: "Calendar", art: <Calendar /> },
  { name: "Contacts", art: <Contacts /> },
  { name: "Reminders", art: <Reminders /> },
  { name: "Notes", art: <Notes />, running: true },
  { name: "Freeform", art: <Freeform /> },
  { name: "Apple TV", art: <AppleTv /> },
  { name: "Music", art: <Music /> },
  { name: "App Store", art: <AppStore /> },
  { name: "System Settings", art: <Settings /> },
  { name: "Word", art: <Office id="word" letter="W" bands={["#5aa2ea", "#3f7dd2", "#2a5cb8", "#1d4089"]} box="#2457b5" />, running: true },
  { name: "Excel", art: <Office id="excel" letter="X" bands={["#62c489", "#4aa86b", "#34804c", "#2b6138"]} box="#2f7d42" /> },
  { name: "PowerPoint", art: <Office id="powerpoint" letter="P" bands={["#dd6c4c", "#c85a3b"]} box="#bf4626" round /> },
  { name: "OneNote", art: <Office id="onenote" letter="N" bands={["#bb68e2", "#bb68e2"]} box="#7023a8" /> },
  { name: "OneDrive", art: <OneDrive /> },
  { name: "Spotify", art: <Spotify />, running: true },
  { name: "IntelliJ IDEA", art: <IntelliJ />, running: true },
  { name: "Visual Paradigm", art: <VisualParadigm /> },
  { name: "Discord", art: <Discord />, running: true },
  { name: "Teams", art: <Teams />, running: true },
  { name: "Messenger", art: <Messenger />, running: true },
  { name: "GitHub Desktop", art: <GithubDesktop /> },
];

const RECENT: DockEntry[] = [
  { name: "MySQL Workbench", art: <MySql />, running: true },
  { name: "Kiwi", art: <Kiwi /> },
];

const MINIMIZED: DockEntry[] = [
  { name: "Spotify window", art: <ThumbSpotify /> },
  { name: "Discord window", art: <ThumbDiscord /> },
  { name: "MySQL Workbench window", art: <ThumbMySql /> },
  { name: "Trash", art: <Trash /> },
];

const DockGroup = ({ entries }: { entries: DockEntry[] }) => (
  <>
    {entries.map((e) => (
      <DockCell key={e.name} aria-label={e.name}>
        <DockArt>{e.art}</DockArt>
        {e.running && <RunningDot />}
      </DockCell>
    ))}
  </>
);

export default function App() {
  return (
    <>
      <GlobalStyle />
      <Desktop>
        <Wallpaper />
        <TopMenu />
        <Browser />
        <DockBar>
          <DockGroup entries={APPS} />
          <DockDivider />
          <DockGroup entries={RECENT} />
          <DockDivider />
          <DockGroup entries={MINIMIZED} />
        </DockBar>
      </Desktop>
    </>
  );
}
